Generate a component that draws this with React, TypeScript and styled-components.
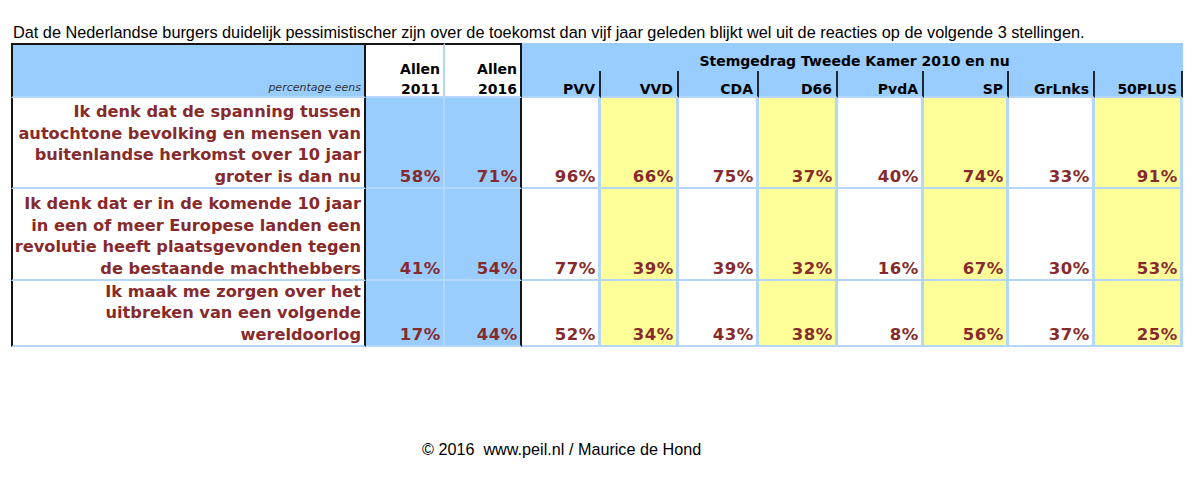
import styled, { createGlobalStyle } from 'styled-components';

const GlobalStyle = createGlobalStyle`
  html, body { margin: 0; padding: 0; background: #ffffff; }
  body { font-family: "Liberation Sans", Arial, sans-serif; }
`;

const blue = '#99ccff';
const yellow = '#ffff99';
const line = '#b4d6f8';
const ink = '#862a2c';
const black = '#151515';

const Page = styled.div`
  width: 1200px;
  height: 487px;
  padding: 22px 0 0 11px;
  box-sizing: border-box;
`;

const Intro = styled.div`
  font-family: "Liberation Sans", Arial, sans-serif;
  font-size: 16.3px;
  line-height: 20px;
  color: #000;
  padding-left: 2px;
  margin-bottom: 1px;
  white-space: nowrap;
`;

const Grid = styled.div`
  display: grid;
  grid-template-columns: 355px 79px 77px 79px 78px 80px 79px 86px 85px 86px 88px;
  grid-template-rows: 28px 27px 91px 92px 66px;
  font-family: "DejaVu Sans", Verdana, sans-serif;
  font-weight: bold;
`;

const Cell = styled.div`
  box-sizing: border-box;
  display: flex;
  flex-direction: column;
  justify-content: flex-end;
  align-items: flex-end;
  border-bottom: 2px solid ${line};
  padding-right: 3px;
`;

const HeadLabel = styled(Cell)`
  grid-row: 1 / span 2;
  background: ${blue};
  border-top: 2px solid ${black};
  border-left: 2px solid ${black};
  border-right: 2px solid ${black};
  padding-bottom: 1px;
`;

const Caption = styled.span`
  font-weight: normal;
  font-style: italic;
  font-size: 11px;
  line-height: 14px;
  color: #333;
`;

const HeadAllen = styled(Cell)<{ $last?: boolean }>`
  grid-row: 1 / span 2;
  background: #ffffff;
  border-top: 2px solid ${black};
  border-right: 2px solid ${(p) => (p.$last ? black : line)};
`;

const HeadText = styled.span`
  font-size: 14px;
  line-height: 20px;
  color: #000;
  text-align: right;
  margin-bottom: -3px;
`;

const GroupHead = styled.div`
  grid-column: 4 / span 8;
  background: ${blue};
  font-size: 14px;
  line-height: 20px;
  color: #000;
  display: flex;
  align-items: flex-end;
  justify-content: center;
  padding-left: 4px;
`;

const PartyHead = styled(Cell)`
  background: ${blue};
  border-right: 2px solid #1d2634;
  padding-right: 4px;
`;

const Label = styled(Cell)`
  background: #ffffff;
  border-left: 2px solid ${black};
  border-right: 2px solid ${black};
`;

const LabelText = styled.div`
  font-size: 16.2px;
  line-height: 21.4px;
  color: ${ink};
  text-align: right;
  white-space: nowrap;
`;

const Value = styled(Cell)<{ $bg: string; $edge: string; $w: number }>`
  background: ${(p) => p.$bg};
  border-right: ${(p) => p.$w}px solid ${(p) => p.$edge};
  font-size: 16.5px;
  line-height: 21.4px;
  letter-spacing: 0.6px;
  padding-right: 2px;
  color: ${ink};
`;

const Footer = styled.div`
  margin-top: 92px;
  padding-left: 411px;
  font-family: "Liberation Sans", Arial, sans-serif;
  font-size: 16.2px;
  line-height: 20px;
  color: #000;
  white-space: pre;
`;

const parties = ['PVV', 'VVD', 'CDA', 'D66', 'PvdA', 'SP', 'GrLnks', '50PLUS'];

const rows = [
  {
    lines: [
      'Ik denk dat de spanning tussen',
      'autochtone bevolking en mensen van',
      'buitenlandse herkomst over 10 jaar',
      'groter is dan nu',
    ],
    all: [58, 71],
    party: [96, 66, 75, 37, 40, 74, 33, 91],
  },
  {
    lines: [
      'Ik denk dat er in de komende 10 jaar',
      'in een of meer Europese landen een',
      'revolutie heeft plaatsgevonden tegen',
      'de bestaande machthebbers',
    ],
    all: [41, 54],
    party: [77, 39, 39, 32, 16, 67, 30, 53],
  },
  {
    lines: ['Ik maak me zorgen over het', 'uitbreken van een volgende', 'wereldoorlog'],
    all: [17, 44],
    party: [52, 34, 43, 38, 8, 56, 37, 25],
  },
];

export default function App() {
  return (
    <Page>
      <GlobalStyle />
      <Intro>
        Dat de Nederlandse burgers duidelijk pessimistischer zijn over de toekomst dan vijf jaar geleden blijkt wel uit de reacties op de volgende 3 stellingen.
      </Intro>

      <Grid>
        <HeadLabel>
          <Caption>percentage eens</Caption>
        </HeadLabel>
        <HeadAllen>
          <HeadText>Allen<br />2011</HeadText>
        </HeadAllen>
        <HeadAllen $last>
          <HeadText>Allen<br />2016</HeadText>
        </HeadAllen>
        <GroupHead>Stemgedrag Tweede Kamer 2010 en nu</GroupHead>
        {parties.map((p) => (
          <PartyHead key={p}>
            <HeadText>{p}</HeadText>
          </PartyHead>
        ))}

        {rows.map((r, i) => (
          <RowCells key={i} row={r} />
        ))}
      </Grid>

      <Footer>© 2016  www.peil.nl / Maurice de Hond</Footer>
    </Page>
  );
}

function RowCells({ row }: { row: (typeof rows)[number] }) {
  return (
    <>
      <Label>
        <LabelText>
          {row.lines.map((l, j) => (
            <div key={j}>{l}</div>
          ))}
        </LabelText>
      </Label>
      <Value $bg={blue} $edge={line} $w={2}>{row.all[0]}%</Value>
      <Value $bg={blue} $edge={black} $w={2}>{row.all[1]}%</Value>
      {row.party.map((v, k) => (
        <Value key={k} $bg={k % 2 ? yellow : '#ffffff'} $edge={line} $w={3}>
          {v}%
        </Value>
      ))}
    </>
  );
}
